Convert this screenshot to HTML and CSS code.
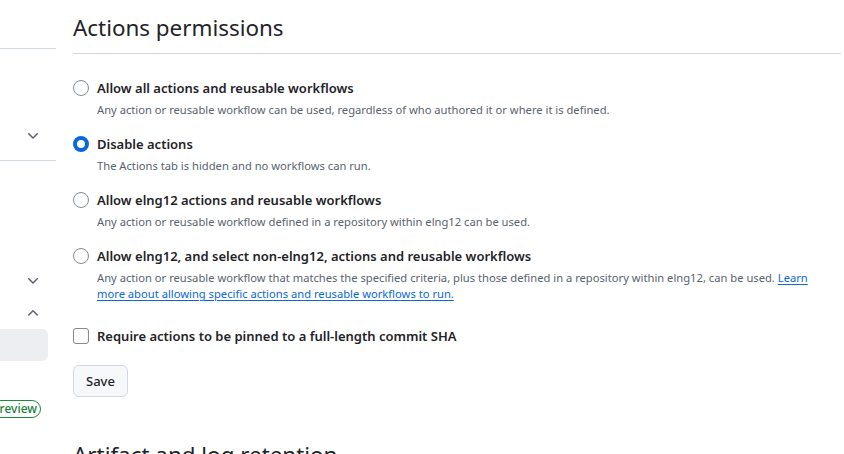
FILE: index.html
```html
<!DOCTYPE html>
<html lang="en">
<head>
<meta charset="utf-8">
<title>Actions permissions</title>
<link rel="stylesheet" href="styles.css">
</head>
<body>
<div class="layout">
  <nav class="sidebar">
    <div class="side-row side-top"></div>
    <div class="side-group">
      <div class="side-row chev-row">
        <svg class="chev" viewBox="0 0 16 16" width="16" height="16"><path d="M12.78 5.22a.749.749 0 0 1 0 1.06l-4.25 4.250a.749.749 0 0 1-1.06 0L3.22 6.28a.749.749 0 1 1 1.06-1.06L8 8.94l3.72-3.72a.749.749 0 0 1 1.06 0Z"/></svg>
      </div>
    </div>
    <div class="side-spacer"></div>
    <div class="side-row small-row">
      <svg class="chev" viewBox="0 0 16 16" width="16" height="16"><path d="M12.78 5.22a.749.749 0 0 1 0 1.06l-4.25 4.25a.749.749 0 0 1-1.06 0L3.22 6.28a.749.749 0 1 1 1.06-1.06L8 8.94l3.72-3.72a.749.749 0 0 1 1.06 0Z"/></svg>
    </div>
    <div class="side-row small-row">
      <svg class="chev" viewBox="0 0 16 16" width="16" height="16"><path d="M3.22 10.53a.749.749 0 0 1 0-1.06l4.25-4.25a.749.749 0 0 1 1.06 0l4.25 4.25a.749.749 0 1 1-1.06 1.06L8 6.811 4.28 10.53a.749.749 0 0 1-1.06 0Z"/></svg>
    </div>
    <div class="side-row selected-row"></div>
    <div class="side-row badge-row"><span class="badge">review</span></div>
  </nav>

  <main class="main">
    <h2 class="section-title">Actions permissions</h2>

    <div class="options">
      <div class="option">
        <label class="option-label"><span class="radio"></span>Allow all actions and reusable workflows</label>
        <p class="note">Any action or reusable workflow can be used, regardless of who authored it or where it is defined.</p>
      </div>
      <div class="option">
        <label class="option-label"><span class="radio checked"></span>Disable actions</label>
        <p class="note">The Actions tab is hidden and no workflows can run.</p>
      </div>
      <div class="option">
        <label class="option-label"><span class="radio"></span>Allow elng12 actions and reusable workflows</label>
        <p class="note">Any action or reusable workflow defined in a repository within elng12 can be used.</p>
      </div>
      <div class="option">
        <label class="option-label"><span class="radio"></span>Allow elng12, and select non-elng12, actions and reusable workflows</label>
        <p class="note">Any action or reusable workflow that matches the specified criteria, plus those defined in a repository within elng12, can be used. <a href="#">Learn more about allowing specific actions and reusable workflows to run.</a></p>
      </div>
    </div>

    <div class="check-row">
      <label class="option-label"><span class="checkbox"></span>Require actions to be pinned to a full-length commit SHA</label>
    </div>

    <button class="btn" type="button">Save</button>

    <h2 class="section-title next-title">Artifact and log retention</h2>
  </main>
</div>
</body>
</html>
```

FILE: styles.css
```css
* { box-sizing: border-box; }

html, body {
  margin: 0;
  padding: 0;
  background: #ffffff;
  overflow: hidden;
}

body {
  font-family: "Noto Sans", "Open Sans", sans-serif;
  color: #1f2328;
  font-size: 13px;
  line-height: 20px;
}

.layout {
  display: flex;
  gap: 17px;
  height: 454px;
}

.sidebar {
  width: 56px;
  flex: none;
  display: flex;
  flex-direction: column;
}

.side-row {
  display: flex;
  align-items: center;
  justify-content: flex-end;
  padding-right: 15px;
}

.side-top {
  height: 49px;
  border-bottom: 1px solid #d1d9e0;
}

.side-group {
  height: 112px;
  display: flex;
  flex-direction: column;
  justify-content: flex-end;
  border-bottom: 1px solid #d1d9e0;
}

.chev-row { height: 48px; }

.side-spacer { height: 104px; }

.small-row { height: 32px; }

.chev {
  width: 16px;
  height: 16px;
  fill: #59636e;
}

.selected-row {
  height: 32px;
  width: 48px;
  background: #eceef1;
  border-radius: 0 6px 6px 0;
}

.badge-row {
  height: 48px;
  margin-top: 24px;
  padding-right: 15px;
}

.badge {
  display: inline-block;
  font-size: 12px;
  font-weight: 500;
  line-height: 16px;
  color: #1a7f37;
  border: 1px solid #1f883d;
  border-radius: 2em;
  padding: 0 3px 0 7px;
  white-space: nowrap;
}

.main {
  width: 768px;
  flex: none;
}

.section-title {
  margin: 0;
  font-size: 22.4px;
  font-weight: 400;
  line-height: 36px;
  padding-top: 10px;
  padding-bottom: 7px;
  border-bottom: 1px solid #d1d9e0;
}

.options {
  display: flex;
  flex-direction: column;
  gap: 16px;
  padding-top: 24px;
}

.option-label {
  display: flex;
  align-items: center;
  gap: 8px;
  font-weight: 600;
  font-size: 13px;
  line-height: 20px;
}

.radio {
  width: 16px;
  height: 16px;
  flex: none;
  border-radius: 50%;
  border: 1px solid #818b98;
  background: #ffffff;
}

.radio.checked {
  border: 4px solid #0969da;
}

.checkbox {
  width: 16px;
  height: 16px;
  flex: none;
  border-radius: 3px;
  border: 1px solid #818b98;
  background: #ffffff;
}

.note {
  margin: 4px 12px 0 24px;
  font-size: 11.2px;
  line-height: 16px;
  color: #59636e;
}

.note a {
  color: #0969da;
  text-decoration: underline;
  text-underline-offset: 2px;
}

.check-row {
  padding-top: 24px;
}

.btn {
  display: block;
  margin-top: 19px;
  height: 32px;
  padding: 0 12px;
  font-family: inherit;
  font-size: 13px;
  font-weight: 500;
  color: #1f2328;
  background: #f6f8fa;
  border: 1px solid #d1d9e0;
  border-radius: 6px;
}

.next-title {
  margin-top: 40px;
  padding-top: 0;
  border-bottom: none;
}
```
